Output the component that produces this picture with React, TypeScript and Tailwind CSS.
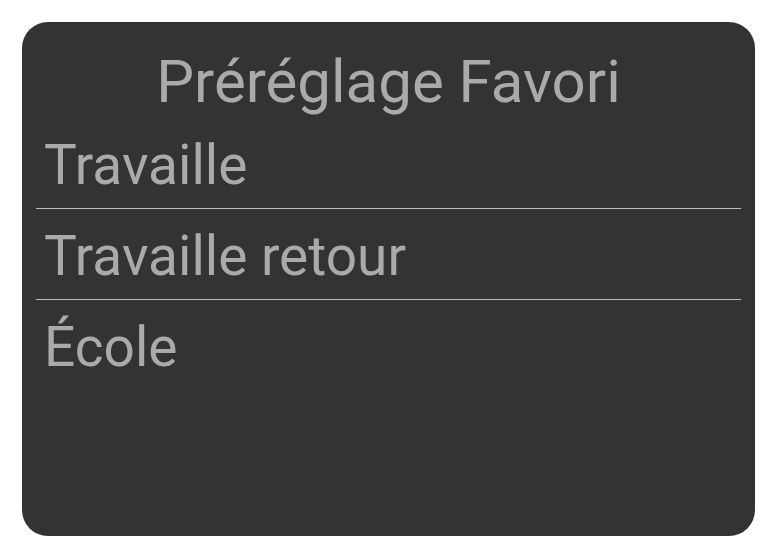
export default function App() {
  const items = ["Travaille", "Travaille retour", "École"];
  return (
    <div className="w-[777px] h-[559px] bg-white p-[22px]" style={{ fontFamily: "Roboto, 'Noto Sans', sans-serif" }}>
      <div className="w-[733px] h-[514px] rounded-[26px] bg-[#333333] flex flex-col">
        <div className="h-[96px] pt-[30px] text-center text-[60px] leading-[60px] text-[#aaaaaa]">
          Préréglage Favori
        </div>
        <div className="px-[14px] flex flex-col">
          {items.map((t, i) => (
            <div
              key={t}
              className={`h-[91px] pt-[20px] pl-[8px] text-[55px] leading-[55px] text-[#aaaaaa] ${i < 2 ? "border-b border-[#bbbbbb]" : ""}`}
            >
              {t}
            </div>
          ))}
        </div>
      </div>
    </div>
  );
}
